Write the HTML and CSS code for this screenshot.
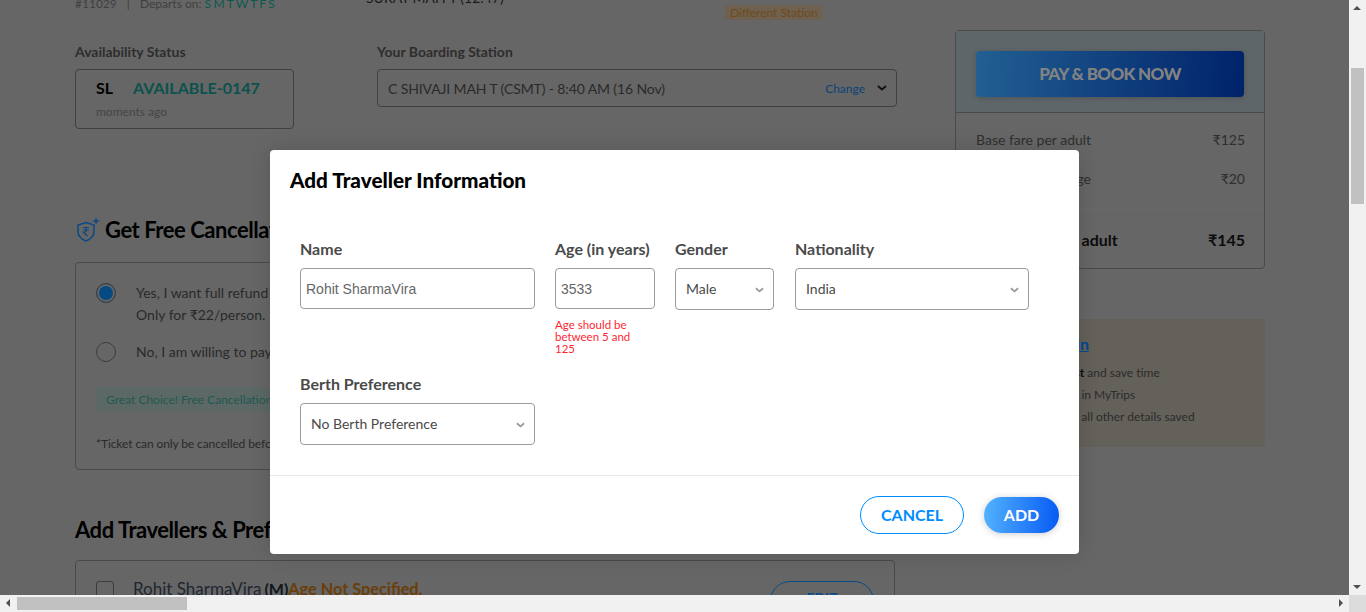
FILE: index.html
```html
<!DOCTYPE html>
<html lang="en">
<head>
<meta charset="UTF-8" />
<meta name="viewport" content="width=device-width, initial-scale=1.0">
<title>Review Booking</title>
<link rel="stylesheet" href="styles.css">
</head>
<body>
<div class="screen">
  <div class="page">
    <main class="main">
      <div class="train-row">
        <div class="train-no">#11029 <span class="sep">|</span> Departs on: <span class="days">S M T W T F S</span></div>
        <div class="train-stop">SURAT MAH T (12:47)</div>
        <div class="badge">Different Station</div>
      </div>

      <div class="status-row">
        <div>
          <div class="label">Availability Status</div>
          <div class="status-box">
            <div class="status-line"><b>SL</b><span class="avail">AVAILABLE-0147</span></div>
            <div class="status-time">moments ago</div>
          </div>
        </div>
        <div>
          <div class="label">Your Boarding Station</div>
          <div class="boarding-box">
            <span class="boarding-name">C SHIVAJI MAH T (CSMT) - 8:40 AM (16 Nov)</span>
            <span class="change">Change</span>
            <svg class="boarding-arrow" viewBox="0 0 10 6" width="10" height="6"><path d="M1 1l4 3.5L9 1" fill="none" stroke="#111" stroke-width="2"/></svg>
          </div>
        </div>
      </div>

      <h2 class="section-title cancel-title">
        <svg class="shield" viewBox="0 0 26 26" width="26" height="26">
          <path d="M11 5.5l8 2.6v6.4c0 4.6-3.4 7.6-8 9.5-4.600-1.900-8-4.900-8-9.500V8.100z" fill="none" stroke="#0a4a86" stroke-width="1.500"/>
          <path d="M8 10.500h6M8 13h6M9 10.500c3 0 3.500 4.800-.5 4.800l4 3.700" fill="none" stroke="#0a4a86" stroke-width="1.200"/>
          <path d="M21 0l1 3 3 1-3 1-1 3-1-3-3-1 3-1z" fill="#0a4a86"/>
        </svg>
        Get Free Cancellation
      </h2>
      <div class="cancel-box">
        <div class="option option-first">
          <span class="radio radio-on"></span>
          <div>
            <div class="option-text">Yes, I want full refund on cancellation</div>
            <div class="option-text">Only for ₹22/person.</div>
          </div>
        </div>
        <div class="option">
          <span class="radio"></span>
          <div class="option-text">No, I am willing to pay the cancellation charges</div>
        </div>
        <div class="choice-note">Great Choice! Free Cancellation added</div>
        <div class="cancel-terms">*Ticket can only be cancelled before chart preparation</div>
      </div>

      <h2 class="section-title travellers-title">Add Travellers &amp; Preferences</h2>
      <div class="traveller-card">
        <span class="check"></span>
        <span class="traveller-name">Rohit SharmaVira<b class="gender">(M)</b><b class="warn">Age Not Specified.</b></span>
        <span class="edit">EDIT</span>
      </div>
    </main>

    <aside class="side">
      <div class="fare-card">
        <div class="pay-wrap"><div class="pay-btn">PAY &amp; BOOK NOW</div></div>
        <div class="fare-rows">
          <div class="fare-row"><span>Base fare per adult</span><span class="amt">₹125</span></div>
          <div class="fare-row"><span>Booking Surcharge</span><span class="amt">₹20</span></div>
        </div>
        <div class="fare-total"><span>Total Price per adult</span><span class="amt">₹145</span></div>
      </div>
      <div class="login-card">
        <div class="login-title">Login</div>
        <div class="login-line">Pick your tickets <b>fast</b> and save time</div>
        <div class="login-line">View your bookings in MyTrips</div>
        <div class="login-line">Get your traveller &amp; all other details saved</div>
      </div>
    </aside>
  </div>

  <div class="modal">
    <h3 class="modal-title">Add Traveller Information</h3>
    <div class="modal-body">
      <div class="field-row">
        <div class="field f-wide">
          <label class="field-label">Name</label>
          <div class="input input-arial">Rohit SharmaVira</div>
        </div>
        <div class="field f-small">
          <label class="field-label">Age (in years)</label>
          <div class="input input-arial">3533</div>
          <div class="field-error">Age should be between 5 and 125</div>
        </div>
        <div class="field f-gender">
          <label class="field-label">Gender</label>
          <div class="input input-select">Male
            <svg viewBox="0 0 10 6" width="9" height="6"><path d="M1 1l4 3.500L9 1" fill="none" stroke="#9b9b9b" stroke-width="2"/></svg>
          </div>
        </div>
        <div class="field f-nation">
          <label class="field-label">Nationality</label>
          <div class="input input-select">India
            <svg viewBox="0 0 10 6" width="9" height="6"><path d="M1 1l4 3.500L9 1" fill="none" stroke="#9b9b9b" stroke-width="2"/></svg>
          </div>
        </div>
      </div>
      <div class="field f-wide">
        <label class="field-label">Berth Preference</label>
        <div class="input input-select">No Berth Preference
          <svg viewBox="0 0 10 6" width="9" height="6"><path d="M1 1l4 3.500L9 1" fill="none" stroke="#9b9b9b" stroke-width="2"/></svg>
        </div>
      </div>
    </div>
    <div class="modal-foot">
      <span class="btn-cancel">CANCEL</span>
      <span class="btn-add">ADD</span>
    </div>
  </div>

  <div class="vbar">
    <span class="arrow arrow-up"></span>
    <span class="vthumb"></span>
    <span class="arrow arrow-down"></span>
  </div>
  <div class="hbar">
    <span class="arrow arrow-left"></span>
    <span class="hthumb"></span>
    <span class="arrow arrow-right"></span>
  </div>
  <div class="corner"></div>
</div>
</body>
</html>
```

FILE: styles.css
```css
* {
  box-sizing: border-box;
}
body {
  margin: 0;
  font-family: Lato, "Noto Sans", sans-serif;
}
.screen {
  position: relative;
  width: 1366px;
  height: 612px;
  overflow: hidden;
  background: #666;
  color: #2c2c2c;
}

/* dimmed page behind the modal */
.page {
  display: flex;
  gap: 58px;
  padding-left: 75px;
}
.main {
  width: 822px;
}
.train-row {
  display: flex;
  height: 48px;
  margin-top: -4px;
  font-size: 12px;
  line-height: 16px;
  color: #3f3f3f;
}
.train-no {
  width: 291px;
}
.sep {
  margin: 0 7px;
}
.days {
  color: #0b5a50;
  letter-spacing: -0.3px;
}
.train-stop {
  width: 359px;
  margin-top: -6px;
  font-size: 14px;
  color: #1a1a1a;
}
.badge {
  align-self: flex-start;
  margin-top: 9px;
  padding: 0 5px;
  height: 15px;
  line-height: 15px;
  font-size: 12px;
  color: #704a1c;
  background: #6e6150;
  border-radius: 3px;
}
.status-row {
  display: flex;
  gap: 83px;
}
.label {
  height: 16px;
  margin-bottom: 9px;
  font-size: 14px;
  line-height: 16px;
  font-weight: 700;
  color: #2f2d2d;
}
.status-box {
  width: 219px;
  height: 60px;
  padding: 8px 20px;
  border: 1px solid #404040;
  border-radius: 4px;
}
.status-line {
  display: flex;
  gap: 20px;
  font-size: 16px;
  line-height: 20px;
}
.status-line b {
  color: #000;
}
.avail {
  font-weight: 700;
  font-size: 16px;
  color: #0b524e;
}
.status-time {
  margin-top: 7px;
  font-size: 12px;
  line-height: 14px;
  color: #454545;
}
.boarding-box {
  display: flex;
  align-items: center;
  width: 520px;
  height: 38px;
  padding: 0 9px 0 10px;
  border: 1px solid #404040;
  border-radius: 4px;
  font-size: 14px;
  color: #2a2a2a;
}
.boarding-name {
  flex: 1;
  letter-spacing: -0.12px;
}
.change {
  font-size: 12px;
  color: #0a4478;
  margin-right: 12px;
}
.section-title {
  margin: 0;
  font-size: 22px;
  line-height: 28px;
  font-weight: 700;
  letter-spacing: -0.45px;
  color: #000;
  white-space: nowrap;
}
.cancel-title {
  display: flex;
  align-items: center;
  gap: 4px;
  margin-top: 87px;
}
.cancel-box {
  width: 820px;
  height: 208px;
  margin-top: 18px;
  padding: 20px 20px 0;
  border: 1px solid #4a4a4a;
  border-radius: 4px;
}
.option {
  display: flex;
  gap: 20px;
}
.option > div {
  margin-top: -1px;
}
.option-first {
  margin-bottom: 16px;
}
.option-text {
  font-size: 14px;
  line-height: 22px;
  color: #2a2a2a;
}
.radio {
  width: 20px;
  height: 20px;
  border: 1px solid #3c3c3c;
  border-radius: 50%;
  flex-shrink: 0;
}
.radio-on {
  border-color: #3c3c3c;
  background: #064a82;
  box-shadow: inset 0 0 0 2px #666;
}
.choice-note {
  width: 400px;
  height: 25px;
  margin-top: 24px;
  padding-left: 10px;
  line-height: 25px;
  font-size: 12px;
  color: #1f5850;
  background: #5c6866;
}
.cancel-terms {
  margin-top: 25px;
  font-size: 12px;
  line-height: 14px;
  letter-spacing: -0.1px;
  color: #2a2a2a;
}
.travellers-title {
  margin-top: 46px;
}
.traveller-card {
  display: flex;
  width: 820px;
  height: 80px;
  margin-top: 16px;
  padding: 19px 20px;
  border: 1px solid #4a4a4a;
  border-radius: 4px;
}
.check {
  width: 18px;
  height: 18px;
  margin-top: 1px;
  margin-right: 20px;
  border: 1px solid #3c3c3c;
  border-radius: 3px;
}
.traveller-name {
  flex: 1;
  margin-left: -1px;
  font-size: 17px;
  line-height: 18px;
  color: #1f2630;
}
.gender {
  margin-left: 3px;
  font-size: 16px;
  color: #10161e;
}
.traveller-name .warn {
  font-size: 16.300px;
  color: #6a3e0a;
}
.edit {
  width: 104px;
  height: 40px;
  margin-top: 1px;
  border: 1px solid #0a4a86;
  border-radius: 20px;
  text-align: center;
  line-height: 32px;
  font-size: 14px;
  font-weight: 700;
  color: #0a4a86;
}

/* sidebar */
.side {
  width: 310px;
  padding-top: 30px;
}
.fare-card {
  height: 239px;
  border: 1px solid #4a4a4a;
  border-radius: 4px;
}
.pay-wrap {
  height: 82px;
  padding: 20px;
  border-bottom: 1px solid #4a4a4a;
  background: #5f666a;
}
.pay-btn {
  height: 46px;
  border-radius: 4px;
  background: linear-gradient(93deg, #225f92, #00226a);
  text-align: center;
  line-height: 46px;
  font-size: 17px;
  font-weight: 900;
  letter-spacing: -0.65px;
  color: #828282;
  box-shadow: 0 1px 5px rgba(0, 0, 0, 0.2);
}
.fare-rows {
  height: 97px;
  padding: 17px 20px 0;
  border-bottom: 1px solid #6a6a6a;
}
.fare-row {
  display: flex;
  justify-content: space-between;
  height: 39px;
  line-height: 20px;
  font-size: 14px;
  color: #2f2f2f;
}
.amt {
  margin-right: -1px;
}
.fare-total {
  display: flex;
  justify-content: space-between;
  padding: 20px 20px 0;
  font-size: 16px;
  line-height: 20px;
  font-weight: 700;
  color: #0c0c0c;
}
.login-card {
  height: 128px;
  margin-top: 50px;
  padding: 15px 0 0 20px;
  border-radius: 4px;
  background: #64605a;
}
.login-title {
  width: 114px;
  height: 20px;
  margin-bottom: 8px;
  text-align: right;
  font-size: 16px;
  line-height: 20px;
  font-weight: 700;
  color: #004a8f;
  text-decoration: underline;
}
.login-line {
  height: 22px;
  font-size: 12px;
  line-height: 22px;
  color: #2c2c2c;
  white-space: nowrap;
}
.login-line b {
  color: #0c0c0c;
}

/* modal */
.modal {
  position: absolute;
  left: 270px;
  top: 150px;
  width: 809px;
  height: 404px;
  background: #fff;
  border-radius: 4px;
  box-shadow: 0 0 20px rgba(0, 0, 0, 0.15);
  color: #4a4a4a;
}
.modal-title {
  margin: 0;
  padding: 16px 20px 0;
  height: 44px;
  font-size: 20.700px;
  line-height: 28px;
  font-weight: 900;
  color: #000;
}
.modal-body {
  height: 236px;
  margin-top: 46px;
  padding: 0 30px;
  border-bottom: 1px solid #e7e7e7;
}
.field-row {
  display: flex;
  gap: 20px;
  height: 135px;
}
.f-wide {
  width: 235px;
}
.f-small {
  width: 100px;
}
.f-gender {
  width: 99px;
  margin-right: 1px;
}
.f-nation {
  width: 234px;
}
.field-label {
  display: block;
  height: 18px;
  margin-bottom: 10px;
  font-size: 16px;
  line-height: 18px;
  font-weight: 700;
  white-space: nowrap;
}
.input {
  display: flex;
  align-items: center;
  height: 42px;
  border: 1px solid #9b9b9b;
  border-radius: 4px;
  font-size: 14px;
}
.input-arial {
  height: 41px;
  padding-left: 5px;
  font-family: "Liberation Sans", Arial, sans-serif;
  color: #666;
}
.input-select {
  justify-content: space-between;
  padding: 0 9px 2px 10px;
}
.input-select svg {
  margin-top: 3px;
}
.field-error {
  margin-top: 10px;
  padding-right: 15px;
  font-size: 11.500px;
  line-height: 12px;
  color: #ff1f35;
}
.modal-foot {
  display: flex;
  justify-content: flex-end;
  align-items: center;
  gap: 20px;
  padding: 20px 20px 0;
}
.btn-cancel {
  width: 104px;
  height: 38px;
  border: 1px solid #008cff;
  border-radius: 19px;
  text-align: center;
  line-height: 36px;
  font-size: 16px;
  font-weight: 700;
  color: #008cff;
}
.btn-add {
  width: 75px;
  height: 36px;
  border-radius: 18px;
  background: linear-gradient(93deg, #53b2fe, #065af3);
  text-align: center;
  line-height: 36px;
  font-size: 16px;
  font-weight: 700;
  color: #fff;
  box-shadow: 0 1px 7px rgba(0, 0, 0, 0.2);
}

/* scrollbars of the browser window */
.vbar {
  position: absolute;
  top: 0;
  right: 0;
  bottom: 17px;
  width: 17px;
  background: #f1f1f1;
}
.vthumb {
  position: absolute;
  left: 2px;
  top: 68px;
  width: 13px;
  height: 136px;
  background: #c1c1c1;
}
.hbar {
  position: absolute;
  left: 0;
  right: 17px;
  bottom: 0;
  height: 17px;
  background: #f1f1f1;
}
.hthumb {
  position: absolute;
  left: 17px;
  top: 2px;
  width: 170px;
  height: 13px;
  background: #c1c1c1;
}
.corner {
  position: absolute;
  right: 0;
  bottom: 0;
  width: 17px;
  height: 17px;
  background: #dcdcdc;
}
.arrow {
  position: absolute;
  width: 0;
  height: 0;
  border: 4px solid transparent;
}
.arrow-up {
  left: 4px;
  top: 2px;
  border-bottom-color: #505050;
}
.arrow-down {
  left: 4px;
  bottom: 2px;
  border-top-color: #505050;
}
.arrow-left {
  left: 2px;
  top: 4px;
  border-right-color: #505050;
}
.arrow-right {
  right: 2px;
  top: 4px;
  border-left-color: #505050;
}
```
